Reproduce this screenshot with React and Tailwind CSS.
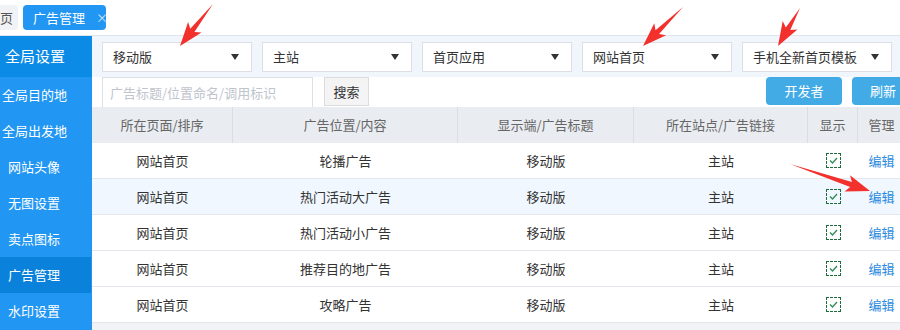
import React from 'react';

const font = "font-['Microsoft_YaHei','Noto_Sans_CJK_SC',sans-serif]";

const menu = [
  { label: '全局目的地', pad: 'pl-[2px]' },
  { label: '全局出发地', pad: 'pl-[2px]' },
  { label: '网站头像', pad: 'pl-[8px]' },
  { label: '无图设置', pad: 'pl-[8px]' },
  { label: '卖点图标', pad: 'pl-[8px]' },
  { label: '广告管理', pad: 'pl-[8px]', active: true },
  { label: '水印设置', pad: 'pl-[8px]' },
];

const selects = ['移动版', '主站', '首页应用', '网站首页', '手机全新首页模板'];

const rows = [
  ['网站首页', '轮播广告', '移动版', '主站'],
  ['网站首页', '热门活动大广告', '移动版', '主站'],
  ['网站首页', '热门活动小广告', '移动版', '主站'],
  ['网站首页', '推荐目的地广告', '移动版', '主站'],
  ['网站首页', '攻略广告', '移动版', '主站'],
];

const cols = ['w-[141px]', 'w-[225px]', 'w-[176px]', 'w-[174px]', 'w-[50px]', 'w-[47px]'];
const headers = ['所在页面/排序', '广告位置/内容', '显示端/广告标题', '所在站点/广告链接', '显示', '管理'];

// ─── Red annotation arrow ─────────────────────────────────────────────────────
function arrowPoints(x1, y1, x2, y2) {
  const dx = x2 - x1, dy = y2 - y1;
  const len = Math.hypot(dx, dy);
  const ux = dx / len, uy = dy / len;
  const nx = -uy, ny = ux;
  const h = 20;
  const p = (a, b) => `${a.toFixed(1)},${b.toFixed(1)}`;
  return [
    p(x1, y1),
    p(x2 - ux * h + nx * 2.6, y2 - uy * h + ny * 2.6),
    p(x2 - ux * (h + 4) + nx * 8.5, y2 - uy * (h + 4) + ny * 8.5),
    p(x2, y2),
    p(x2 - ux * (h + 4) - nx * 8.5, y2 - uy * (h + 4) - ny * 8.5),
    p(x2 - ux * h - nx * 2.6, y2 - uy * h - ny * 2.6),
  ].join(' ');
}

function Arrows() {
  const list = [
    [213, 4, 180, 46],
    [683, 7, 643, 46],
    [800, 8, 778, 46],
    [790, 164, 870, 191],
  ];
  return (
    <svg className="absolute left-0 top-0 pointer-events-none" width="900" height="330">
      {list.map((a, i) => (
        <polygon key={i} points={arrowPoints(...a)} fill="#f2302c" />
      ))}
    </svg>
  );
}

function Caret() {
  return (
    <svg width="8" height="6" viewBox="0 0 8 6">
      <path d="M0 0 H8 L4 6 Z" fill="#333" />
    </svg>
  );
}

function Check() {
  return (
    <span className="w-[15px] h-[15px] border border-dashed border-[#1b6e3a] flex items-center justify-center">
      <svg width="9" height="7" viewBox="0 0 9 7">
        <path d="M1 3.5 L3.5 6 L8 1" fill="none" stroke="#2e8b57" strokeWidth="1.3" />
      </svg>
    </span>
  );
}

export default function App() {
  return (
    <div className={`relative w-[900px] h-[330px] overflow-hidden bg-white ${font}`}>
      {/* ── Tabs ── */}
      <div className="h-[36px] flex items-center border-b border-[#dde5ee]">
        <div className="w-[18px] h-[25px] shrink-0 bg-[#f0f2f5] rounded-r-[4px] flex items-center pl-0 whitespace-nowrap text-[13px] text-[#555]">
          页
        </div>
        <div className="ml-[5px] w-[83px] h-[25px] shrink-0 bg-[#2196f3] rounded-[4px] flex items-center pl-[10px] text-[13px] text-white whitespace-nowrap">
          <span>广告管理</span>
          <span className="ml-[11px] text-[12px] text-[#cfe6fb]">×</span>
        </div>
      </div>

      <div className="flex h-[294px]">
        {/* ── Sidebar ── */}
        <div className="w-[92px] shrink-0 bg-[#2196f3] text-white">
          <div className="h-[41px] bg-[#0b8be6] flex items-center pl-[5px] text-[15px] whitespace-nowrap">全局设置</div>
          {menu.map(m => (
            <div
              key={m.label}
              className={`h-[36px] flex items-center whitespace-nowrap text-[13px] ${m.pad} ${m.active ? 'bg-[#0a82dc] w-[91px]' : ''}`}
            >
              {m.label}
            </div>
          ))}
        </div>

        {/* ── Main ── */}
        <div className="flex-1 min-w-0 overflow-hidden">
          <div className="h-[41px] bg-[#f0f6fc] flex items-center gap-[10px] pl-[10px]">
            {selects.map(s => (
              <div key={s} className="w-[150px] h-[30px] shrink-0 bg-white border border-[#dcdfe6] flex items-center justify-between pl-[10px] pr-[12px] text-[13px] text-[#333]">
                <span className="whitespace-nowrap">{s}</span>
                <Caret />
              </div>
            ))}
          </div>

          <div className="h-[30px] flex items-start pl-[10px]">
            <div className="w-[211px] h-[30px] border border-[#dcdfe6] border-b-0 flex items-center pl-[7px] text-[13px] text-[#c0c4cc] whitespace-nowrap">
              广告标题/位置命名/调用标识
            </div>
            <div className="ml-[11px] w-[45px] h-[29px] bg-[#f4f4f4] border border-[#dcdcdc] flex items-center justify-center text-[13px] text-[#333]">
              搜索
            </div>
            <div className="ml-auto flex gap-[10px] mr-[-14px]">
              <div className="w-[76px] h-[28px] bg-[#42abe5] rounded-[4px] flex items-center justify-center text-[13px] text-white">开发者</div>
              <div className="w-[62px] h-[28px] bg-[#42abe5] rounded-[4px] flex items-center justify-center text-[13px] text-white">刷新</div>
            </div>
          </div>

          {/* ── Table ── */}
          <div className="w-[813px] text-[13px]">
            <div className="h-[36px] flex bg-[#e9ecf1] text-[#666]">
              {headers.map((h, i) => (
                <div key={h} className={`${cols[i]} shrink-0 flex items-center justify-center ${i < 5 ? 'border-r border-[#dadde3]' : ''}`}>
                  {h}
                </div>
              ))}
            </div>
            {rows.map((r, ri) => (
              <div key={ri} className={`h-[36px] flex border-b border-[#e4e7ec] text-[#333] ${ri === 1 ? 'bg-[#f0f7fe]' : 'bg-white'}`}>
                {r.map((c, ci) => (
                  <div key={ci} className={`${cols[ci]} shrink-0 flex items-center justify-center`}>{c}</div>
                ))}
                <div className={`${cols[4]} shrink-0 flex items-center justify-center`}>
                  <Check />
                </div>
                <div className={`${cols[5]} shrink-0 flex items-center justify-center text-[#2a8ae0]`}>编辑</div>
              </div>
            ))}
            <div className="h-[10px] bg-[#f2f3f6]" />
          </div>
        </div>
      </div>

      <Arrows />
    </div>
  );
}
